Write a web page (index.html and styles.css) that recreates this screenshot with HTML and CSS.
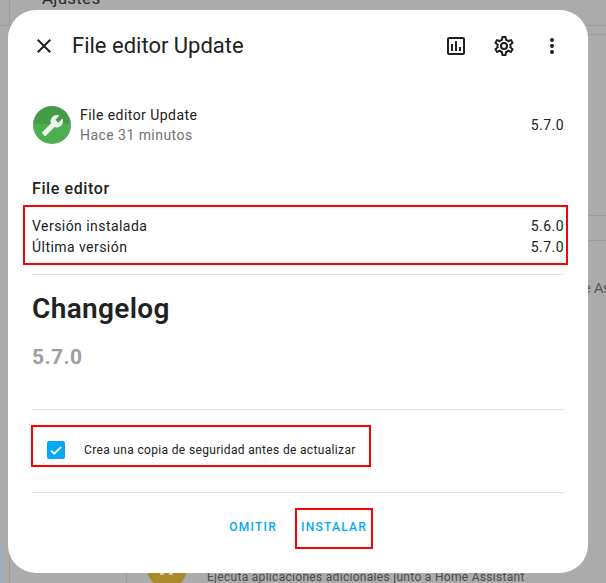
FILE: index.html
```html
<!DOCTYPE html>
<html lang="es">
<head>
<meta charset="utf-8">
<title>File editor Update</title>
<link rel="stylesheet" href="styles.css">
</head>
<body>
<div class="backdrop" aria-hidden="true">
  <span class="bg-title">Ajustes</span>
  <i class="line v v1"></i>
  <i class="line v v2"></i>
  <i class="line h h1"></i>
  <i class="line h h2"></i>
  <i class="line h h3"></i>
  <i class="line h h4"></i>
  <i class="bg-edge"></i>
  <span class="bg-side">e As</span>
  <i class="bg-badge"></i>
  <i class="bg-glyph"></i>
  <span class="bg-desc">Ejecuta aplicaciones adicionales junto a Home Assistant</span>
</div>
<main class="dialog">
  <header class="head">
    <button class="icon-btn"><svg viewBox="0 0 24 24"><path d="M19,6.41L17.59,5L12,10.59L6.41,5L5,6.41L10.59,12L5,17.59L6.41,19L12,13.41L17.59,19L19,17.59L13.41,12L19,6.41Z"/></svg></button>
    <h2 class="title">File editor Update</h2>
    <button class="icon-btn"><svg viewBox="0 0 24 24"><path d="M9 17H7V10H9V17M13 17H11V7H13V17M17 17H15V13H17V17M19 19H5V5H19V19.1M19 3H5C3.9 3 3 3.9 3 5V19C3 20.1 3.9 21 5 21H19C20.1 21 21 20.1 21 19V5C21 3.9 20.1 3 19 3Z"/></svg></button>
    <button class="icon-btn"><svg viewBox="0 0 24 24"><path d="M12,8A4,4 0 0,1 16,12A4,4 0 0,1 12,16A4,4 0 0,1 8,12A4,4 0 0,1 12,8M12,10A2,2 0 0,0 10,12A2,2 0 0,0 12,14A2,2 0 0,0 14,12A2,2 0 0,0 12,10M10,22C9.75,22 9.54,21.82 9.5,21.58L9.13,18.93C8.5,18.68 7.96,18.34 7.44,17.94L4.95,18.95C4.73,19.03 4.46,18.95 4.34,18.73L2.34,15.27C2.21,15.05 2.27,14.78 2.46,14.63L4.57,12.97L4.5,12L4.57,11L2.46,9.37C2.27,9.22 2.21,8.95 2.34,8.73L4.34,5.27C4.46,5.05 4.73,4.96 4.95,5.05L7.44,6.05C7.96,5.66 8.5,5.32 9.13,5.07L9.5,2.42C9.54,2.18 9.75,2 10,2H14C14.25,2 14.46,2.18 14.5,2.42L14.87,5.07C15.5,5.32 16.04,5.66 16.56,6.05L19.05,5.05C19.27,4.96 19.54,5.05 19.66,5.27L21.66,8.73C21.79,8.95 21.73,9.22 21.54,9.37L19.43,11L19.5,12L19.43,13L21.54,14.63C21.73,14.78 21.79,15.05 21.66,15.27L19.66,18.73C19.54,18.95 19.27,19.04 19.05,18.95L16.56,17.95C16.04,18.34 15.5,18.68 14.87,18.93L14.5,21.58C14.46,21.82 14.25,22 14,22H10M11.25,4L10.88,6.61C9.68,6.86 8.62,7.5 7.85,8.39L5.44,7.35L4.69,8.65L6.8,10.2C6.4,11.37 6.4,12.64 6.8,13.8L4.68,15.36L5.43,16.66L7.86,15.62C8.63,16.5 9.68,17.14 10.87,17.38L11.24,20H12.76L13.13,17.39C14.32,17.14 15.37,16.5 16.14,15.62L18.57,16.66L19.32,15.36L17.2,13.81C17.6,12.64 17.6,11.37 17.2,10.2L19.31,8.65L18.56,7.35L16.15,8.39C15.38,7.5 14.32,6.86 13.12,6.62L12.75,4H11.25Z"/></svg></button>
    <button class="icon-btn"><svg viewBox="0 0 24 24"><path d="M12,16A2,2 0 0,1 14,18A2,2 0 0,1 12,20A2,2 0 0,1 10,18A2,2 0 0,1 12,16M12,10A2,2 0 0,1 14,12A2,2 0 0,1 12,14A2,2 0 0,1 10,12A2,2 0 0,1 12,10M12,4A2,2 0 0,1 14,6A2,2 0 0,1 12,8A2,2 0 0,1 10,6A2,2 0 0,1 12,4Z"/></svg></button>
  </header>

  <section class="body">
    <div class="entity">
      <span class="badge"><svg viewBox="0 0 24 24"><path d="M22.7,19L13.6,9.9C14.5,7.6 14,4.9 12.1,3C10.1,1 7.1,0.6 4.7,1.7L9,6L6,9L1.6,4.7C0.4,7.1 0.9,10.1 2.9,12.1C4.8,14 7.5,14.5 9.8,13.6L18.9,22.7C19.3,23.1 19.9,23.1 20.3,22.7L22.6,20.4C23.1,20 23.1,19.3 22.7,19Z"/></svg></span>
      <div class="entity-text">
        <div class="entity-name">File editor Update</div>
        <div class="entity-time">Hace 31 minutos</div>
      </div>
      <div class="entity-value">5.7.0</div>
    </div>

    <h3 class="addon">File editor</h3>
    <div class="versions mark">
      <div class="row"><span>Versión instalada</span><span>5.6.0</span></div>
      <div class="row"><span>Última versión</span><span>5.7.0</span></div>
    </div>
    <hr class="rule first">

    <h1 class="changelog">Changelog</h1>
    <h2 class="release">5.7.0</h2>
    <hr class="rule second">

    <div class="backup mark">
      <span class="check"><svg viewBox="0 0 24 24"><path d="M4.5 12.8l4.9 4.8L19.7 7.2" /></svg></span>
      <span class="backup-label">Crea una copia de seguridad antes de actualizar</span>
    </div>
    <hr class="rule third">

    <div class="actions">
      <button class="text-btn skip">OMITIR</button>
      <button class="text-btn install">INSTALAR</button>
    </div>
  </section>
</main>
</body>
</html>
```
FILE: styles.css
```css
* { box-sizing: border-box; }

html, body { margin: 0; height: 100%; }

body {
  position: relative;
  width: 606px;
  height: 583px;
  overflow: hidden;
  padding: 10px 18px 10px 8px;
  background: #ababab;
  font-family: Roboto, "Noto Sans", sans-serif;
  color: #212121;
}

.backdrop { position: absolute; inset: 0; overflow: hidden; }
.line { position: absolute; background: #9d9d9d; }
.line.v { top: 0; bottom: 0; width: 1px; }
.line.h { height: 1px; }
.v1 { left: 9px; }
.line.v.v2 { left: 126px; top: 520px; }
.h1 { left: 0; width: 606px; top: 25px; }
.h2 { left: 580px; width: 26px; top: 34px; }
.h3 { left: 580px; width: 26px; top: 215px; }
.h4 { left: 580px; width: 26px; top: 240px; }
.bg-edge { position: absolute; left: 0; top: 545px; width: 3px; height: 38px; background: #9fb0b8; }
.bg-title { position: absolute; left: 42px; top: -14px; font-size: 17px; line-height: 24px; color: #2d2d2d; letter-spacing: 0.25px; }
.bg-side { position: absolute; left: 583px; top: 280px; font-size: 14px; line-height: 16px; color: #555; white-space: nowrap; font-family: "Liberation Sans", sans-serif; }
.bg-badge { position: absolute; left: 147px; top: 548px; width: 40px; height: 40px; border-radius: 50%; background: #ab8a2e; }
.bg-glyph { position: absolute; left: 160px; top: 572px; width: 4px; height: 3px; background: #cfc7ae; box-shadow: 9px 0 0 #cfc7ae; }
.bg-desc { position: absolute; left: 207px; top: 569px; font-size: 12px; line-height: 16px; letter-spacing: 0.3px; color: #4c4c4c; white-space: nowrap; }

.dialog {
  position: relative;
  width: 580px;
  height: 563px;
  background: #fff;
  border-radius: 28px;
  overflow: hidden;
}

.head {
  display: flex;
  align-items: center;
  height: 72px;
  padding: 12px;
}

.icon-btn {
  display: flex;
  align-items: center;
  justify-content: center;
  width: 48px;
  height: 48px;
  padding: 0;
  border: 0;
  background: none;
}
.icon-btn svg { width: 24px; height: 24px; fill: #212121; }

.title {
  flex: 1;
  margin: 0 0 0 4px;
  font-size: 22px;
  font-weight: 400;
  line-height: 28px;
  color: #212121;
}

.body { padding: 0 24px; }

.entity {
  display: flex;
  align-items: center;
  height: 40px;
  margin-top: 23px;
  font-size: 14px;
  letter-spacing: 0.45px;
}
.badge {
  display: flex;
  align-items: center;
  justify-content: center;
  flex: none;
  width: 38px;
  height: 38px;
  margin-left: 1px;
  border-radius: 50%;
  background: linear-gradient(#449c48 0 47%, #4caf50 47%);
}
.badge svg { width: 23px; height: 23px; fill: #eef6ee; transform: scaleX(-1); }
.entity-text { flex: 1; margin-left: 9px; }
.entity-name { line-height: 20px; color: #212121; }
.entity-time { line-height: 20px; color: #727272; }
.entity-value { color: #212121; }

.addon {
  margin: 32px 0 0;
  font-size: 16px;
  font-weight: 500;
  line-height: 24px;
  letter-spacing: 0.6px;
}

.mark { border: 2px solid #ff0000; }

.versions {
  margin: 4px -4px 0 -9px;
  padding: 9px 2px 9px 7px;
  height: 60px;
  font-size: 14px;
  letter-spacing: 0.45px;
}
.row { display: flex; justify-content: space-between; line-height: 21px; }

.rule { margin: 0; border: 0; border-top: 1px solid #e0e0e0; }
.first { margin-top: 9px; }

.changelog {
  margin: 16px 0 0;
  font-size: 28px;
  font-weight: 600;
  line-height: 36px;
  letter-spacing: 0.35px;
  color: #212121;
}
.release {
  margin: 16px 0 0;
  font-size: 21px;
  font-weight: 700;
  line-height: 28px;
  letter-spacing: 0.4px;
  color: #9e9e9e;
}
.second { margin-top: 38px; }

.backup {
  display: flex;
  align-items: center;
  width: 340px;
  height: 42px;
  margin: 15px 0 0 -1px;
  padding: 8px 0 0 14px;
}
.check {
  display: flex;
  align-items: center;
  justify-content: center;
  width: 18px;
  height: 18px;
  border-radius: 2px;
  background: #03a9f4;
}
.check svg { width: 16px; height: 16px; fill: none; stroke: #fff; stroke-width: 2.6; }
.backup-label {
  margin-left: 19px;
  font-size: 12px;
  line-height: 16px;
  letter-spacing: 0.34px;
  color: #212121;
}
.third { margin-top: 25px; }

.actions {
  display: flex;
  align-items: center;
  justify-content: flex-end;
  margin-top: 15px;
  padding-right: 191px;
}
.text-btn {
  padding: 0;
  border: 0;
  background: none;
  font-family: Roboto, sans-serif;
  font-size: 12px;
  font-weight: 500;
  letter-spacing: 1.25px;
  color: #03a9f4;
}
.skip { margin: 0 18px 4px 0; }
.install { width: 78px; height: 41px; padding-bottom: 4px; border: 2px solid #ff0000; }
```
